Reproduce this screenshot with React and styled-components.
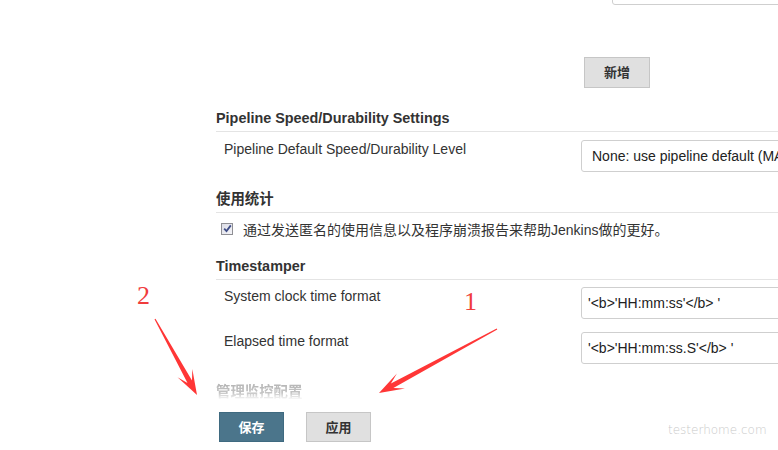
import React from 'react';
import styled, { createGlobalStyle } from 'styled-components';

const GlobalStyle = createGlobalStyle`
  html, body { margin: 0; padding: 0; background: #fff; }
  body {
    width: 778px;
    height: 450px;
    overflow: hidden;
    font-family: "Liberation Sans", Arial, "Noto Sans CJK SC", sans-serif;
    color: #333;
  }
`;

const Page = styled.div`
  position: relative;
  width: 778px;
  height: 450px;
  overflow: hidden;
`;

const Form = styled.div`
  display: flex;
  flex-direction: column;
  padding-left: 216px;
`;

const RepeatBlock = styled.div`
  display: flex;
  flex-direction: column;
  align-items: flex-start;
  padding-left: 365px;
  margin-top: -27px;
`;

const TextBox = styled.div`
  box-sizing: border-box;
  width: 300px;
  height: ${p => p.$h || 32}px;
  margin-left: ${p => p.$indent || 0}px;
  border: 1px solid #cfcfcf;
  border-radius: 3px;
  padding-left: ${p => p.$pad || 6}px;
  display: flex;
  align-items: center;
  font-size: 14px;
  color: #222;
  white-space: nowrap;
  overflow: hidden;
  background: #fff;
`;

const Button = styled.button`
  box-sizing: border-box;
  width: ${p => p.$w || 65}px;
  height: ${p => p.$h || 30}px;
  margin: 0;
  margin-top: ${p => p.$top || 0}px;
  margin-left: ${p => p.$left || 0}px;
  padding: 0;
  border: 1px solid ${p => (p.$primary ? '#3f6a80' : '#c6c6c6')};
  background: ${p => (p.$primary ? '#4b758b' : '#e0e0e0')};
  color: ${p => (p.$primary ? '#fff' : '#333')};
  font-family: "Liberation Sans", Arial, "Noto Sans CJK SC", sans-serif;
  font-size: 13px;
  font-weight: bold;
  line-height: 1;
`;

const SectionHeader = styled.div`
  margin-top: ${p => p.$top || 0}px;
  padding-bottom: 3px;
  border-bottom: 1px solid #e4e4e4;
  font-size: 14.4px;
  font-weight: bold;
  line-height: 20px;
  color: #333;
  white-space: nowrap;
  ${p =>
    p.$faded &&
    `
    color: #666;
    -webkit-mask-image: linear-gradient(to bottom, rgba(0,0,0,0.5) 0%, rgba(0,0,0,0.38) 45%, rgba(0,0,0,0.06) 70%, transparent 100%);
    mask-image: linear-gradient(to bottom, rgba(0,0,0,0.5) 0%, rgba(0,0,0,0.38) 45%, rgba(0,0,0,0.06) 70%, transparent 100%);
  `}
`;

const Row = styled.div`
  display: grid;
  grid-template-columns: 357px 300px;
  align-items: start;
  padding-left: 8px;
  padding-top: ${p => p.$top || 0}px;
`;

const Label = styled.div`
  font-size: 14px;
  line-height: 18px;
  color: #333;
  white-space: nowrap;
`;

const CheckRow = styled.label`
  display: flex;
  align-items: center;
  gap: 10px;
  padding-left: 5px;
  padding-top: ${p => p.$top || 0}px;
  font-size: 14px;
  line-height: 20px;
  color: #333;
  white-space: nowrap;
`;

const CheckBox = styled.span`
  box-sizing: border-box;
  width: 12px;
  height: 12px;
  margin-top: -3px;
  border: 1px solid #8f8f94;
  background: linear-gradient(135deg, #dcdde6 0%, #f4f4f8 100%);
  display: flex;
  align-items: center;
  justify-content: center;
`;

const ButtonBar = styled.div`
  display: flex;
  gap: 22px;
  padding-left: 3px;
  margin-top: ${p => p.$top || 0}px;
`;

const Overlay = styled.svg`
  position: absolute;
  left: 0;
  top: 0;
  width: 778px;
  height: 450px;
  pointer-events: none;
`;

const Mark = styled.span`
  position: absolute;
  left: ${p => p.$x}px;
  top: ${p => p.$y}px;
  font-family: "Liberation Serif", "Times New Roman", serif;
  font-size: 26px;
  line-height: 1;
  color: #f03c3c;
`;

const Watermark = styled.span`
  position: absolute;
  left: 668px;
  top: 423px;
  font-family: "DejaVu Sans", sans-serif;
  font-weight: 200;
  font-size: 12px;
  color: #c9c9c9;
  white-space: nowrap;
`;

function arrowPoints(tail, tip) {
  const [tx, ty] = tail;
  const [hx, hy] = tip;
  const dx = hx - tx;
  const dy = hy - ty;
  const L = Math.hypot(dx, dy);
  const ux = dx / L;
  const uy = dy / L;
  const nx = -uy;
  const ny = ux;
  const p = (d, w) => [hx - ux * d + nx * w, hy - uy * d + ny * w];
  const pts = [
    [tx + nx * 0.6, ty + ny * 0.6],
    p(15, 2.6),
    p(25, 8.5),
    [hx, hy],
    p(25, -8.5),
    p(15, -2.6),
    [tx - nx * 0.6, ty - ny * 0.6],
  ];
  return pts.map(q => q.map(v => v.toFixed(1)).join(',')).join(' ');
}

export default function App() {
  return (
    <Page>
      <GlobalStyle />
      <Form>
        <RepeatBlock>
          <TextBox $indent={31} $h={32} />
          <Button $w={66} $h={31} $top={52} $left={3}>新增</Button>
        </RepeatBlock>

        <SectionHeader $top={20}>Pipeline Speed/Durability Settings</SectionHeader>
        <Row $top={8}>
          <Label>Pipeline Default Speed/Durability Level</Label>
          <TextBox $pad={10}>None: use pipeline default (MAX_SURVIVABILITY)</TextBox>
        </Row>

        <SectionHeader $top={17}>使用统计</SectionHeader>
        <CheckRow $top={7}>
          <CheckBox>
            <svg width="9" height="9" viewBox="0 0 9 9">
              <path d="M1.2 4.6 L3.5 7 L7.8 1.4" fill="none" stroke="#3f4d86" strokeWidth="1.8" />
            </svg>
          </CheckBox>
          通过发送匿名的使用信息以及程序崩溃报告来帮助Jenkins做的更好。
        </CheckRow>

        <SectionHeader $top={16}>Timestamper</SectionHeader>
        <Row $top={7}>
          <Label>System clock time format</Label>
          <TextBox>{"'<b>'HH:mm:ss'</b> '"}</TextBox>
        </Row>
        <Row $top={13}>
          <Label>Elapsed time format</Label>
          <TextBox>{"'<b>'HH:mm:ss.S'</b> '"}</TextBox>
        </Row>

        <SectionHeader $top={18} $faded>管理监控配置</SectionHeader>
        <ButtonBar $top={6}>
          <Button $primary>保存</Button>
          <Button>应用</Button>
        </ButtonBar>
      </Form>

      <Overlay viewBox="0 0 778 450">
        <polygon points={arrowPoints([155, 319], [197, 395])} fill="#ff3636" />
        <polygon points={arrowPoints([497, 329], [379, 393])} fill="#ff3636" />
      </Overlay>
      <Mark $x={137} $y={283}>2</Mark>
      <Mark $x={464} $y={289}>1</Mark>
      <Watermark>testerhome.com</Watermark>
    </Page>
  );
}
